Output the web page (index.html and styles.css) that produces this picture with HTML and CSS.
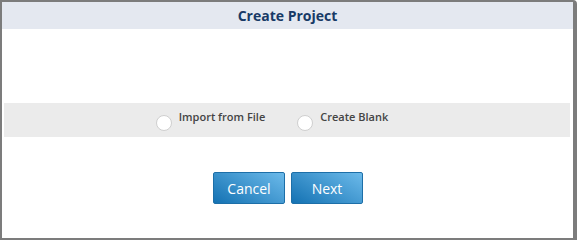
FILE: index.html
```html
<!DOCTYPE html>
<html>
<head>
    <title>Create Project</title>
    <link rel="stylesheet" href="styles.css">
</head>
<body>
    <div class="dialog">
        <div class="dialog-title">Create Project</div>
        <div class="dialog-body">
            <div class="options">
                <label class="option">
                    <input type="radio" name="source" value="file">
                    <span>Import from File</span>
                </label>
                <label class="option">
                    <input type="radio" name="source" value="blank">
                    <span>Create Blank</span>
                </label>
            </div>
            <div class="buttons">
                <button class="button">Cancel</button>
                <button class="button">Next</button>
            </div>
        </div>
    </div>
</body>
</html>
```

FILE: styles.css
```css
body { margin: 0; font-family: "Open Sans", "Liberation Sans", sans-serif; }
.dialog {
    width: 577px;
    height: 240px;
    box-sizing: border-box;
    border: 2px solid #7c7c7c;
    border-right-width: 4px;
    border-top-right-radius: 4px;
    background: #fff;
}
.dialog-title {
    height: 27px;
    line-height: 27px;
    background: #e4e8f0;
    color: #183a66;
    text-align: center;
    font-size: 14px;
    font-weight: 700;
}
.dialog-body { padding-top: 74px; }
.options {
    display: flex;
    justify-content: center;
    gap: 32px;
    height: 34px;
    margin: 0 3px 0 2px;
    padding-right: 30px;
    background: #ebebeb;
}
.option {
    display: flex;
    align-items: flex-start;
    font-size: 11px;
    font-weight: 600;
    color: #444;
    padding-top: 6px;
}
.option input {
    appearance: none;
    width: 16px;
    height: 16px;
    margin: 6px 7px 0 0;
    border: 1px solid #cfcfcf;
    border-radius: 50%;
    background: #fff;
}
.buttons {
    display: flex;
    justify-content: center;
    gap: 6px;
    margin-top: 35px;
    padding-left: 1px;
}
.button {
    width: 72px;
    height: 32px;
    border: 1px solid #1d6fa8;
    border-radius: 2px;
    background: linear-gradient(30deg, #1472b3, #6cbaea);
    color: #fff;
    font-family: inherit;
    font-size: 14px;
}
```
